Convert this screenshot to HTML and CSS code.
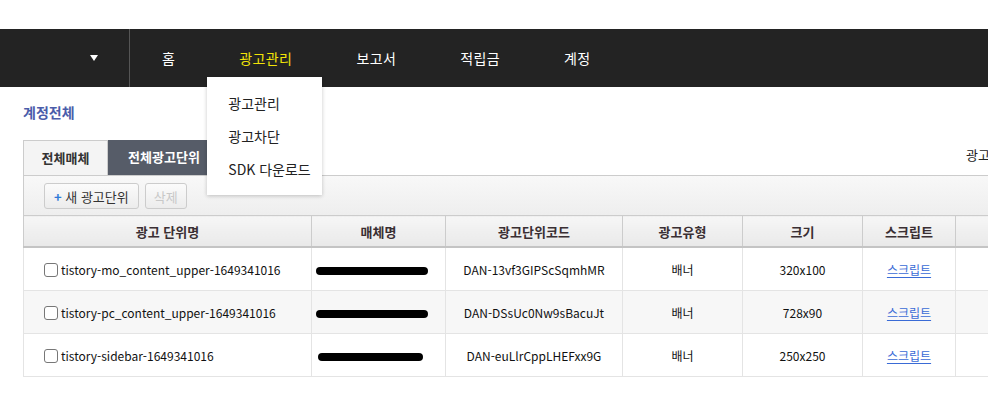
FILE: index.html
```html
<!DOCTYPE html>
<html lang="ko">
<head>
    <meta charset="UTF-8">
    <title>광고관리 - 전체광고단위</title>
    <link rel="stylesheet" href="styles.css">
</head>
<body>
    <div class="topspace"></div>
    <div class="gnb">
        <div class="gnb-side">
            <span class="arrow"></span>
        </div>
        <ul class="gnb-menu">
            <li>홈</li>
            <li class="on">광고관리
                <ul class="submenu">
                    <li>광고관리</li>
                    <li>광고차단</li>
                    <li>SDK 다운로드</li>
                </ul>
            </li>
            <li>보고서</li>
            <li>적립금</li>
            <li>계정</li>
        </ul>
    </div>

    <div class="content">
        <h2 class="page-title">계정전체</h2>

        <div class="tab-row">
            <a class="tab">전체매체</a>
            <a class="tab active">전체광고단위</a>
            <span class="tab-info">광고단위 총 3개</span>
        </div>

        <div class="toolbar">
            <button class="btn"><span class="plus">+</span> 새 광고단위</button>
            <button class="btn disabled">삭제</button>
        </div>

        <table class="unit-table">
            <colgroup>
                <col style="width: 288px">
                <col style="width: 134px">
                <col style="width: 177px">
                <col style="width: 120px">
                <col style="width: 120px">
                <col style="width: 93px">
                <col style="width: 150px">
            </colgroup>
            <thead>
                <tr>
                    <th>광고 단위명</th>
                    <th>매체명</th>
                    <th>광고단위코드</th>
                    <th>광고유형</th>
                    <th>크기</th>
                    <th>스크립트</th>
                    <th>상태</th>
                </tr>
            </thead>
            <tbody>
                <tr>
                    <td class="name"><span class="check"></span>tistory-mo_content_upper-1649341016</td>
                    <td class="media"><span class="redact"></span></td>
                    <td>DAN-13vf3GIPScSqmhMR</td>
                    <td>배너</td>
                    <td>320x100</td>
                    <td><a class="link">스크립트</a></td>
                    <td></td>
                </tr>
                <tr class="alt">
                    <td class="name"><span class="check"></span>tistory-pc_content_upper-1649341016</td>
                    <td class="media"><span class="redact"></span></td>
                    <td>DAN-DSsUc0Nw9sBacuJt</td>
                    <td>배너</td>
                    <td>728x90</td>
                    <td><a class="link">스크립트</a></td>
                    <td></td>
                </tr>
                <tr>
                    <td class="name"><span class="check"></span>tistory-sidebar-1649341016</td>
                    <td class="media"><span class="redact short"></span></td>
                    <td>DAN-euLlrCppLHEFxx9G</td>
                    <td>배너</td>
                    <td>250x250</td>
                    <td><a class="link">스크립트</a></td>
                    <td></td>
                </tr>
            </tbody>
        </table>
    </div>
</body>
</html>
```

FILE: styles.css
```css
html, body {
    margin: 0;
    padding: 0;
    overflow: hidden;
}
body {
    font-family: "Noto Sans CJK KR", "Liberation Sans", sans-serif;
    color: #222;
    background-color: #fff;
}
ul {
    list-style: none;
    margin: 0;
    padding: 0;
}
.topspace {
    height: 29px;
}
.gnb {
    display: flex;
    height: 58px;
    background-color: #232323;
}
.gnb-side {
    width: 130px;
    border-right: 1px solid #555;
    display: flex;
    align-items: center;
    justify-content: flex-end;
    padding-right: 31px;
    box-sizing: border-box;
}
.arrow {
    width: 0;
    height: 0;
    border-left: 4px solid transparent;
    border-right: 4px solid transparent;
    border-top: 6px solid #fff;
}
.gnb-menu {
    display: flex;
    align-items: center;
}
.gnb-menu > li {
    position: relative;
    padding: 0 32px;
    color: #fff;
    font-size: 14px;
    line-height: 58px;
    letter-spacing: 0.4px;
}
.gnb-menu > li.on {
    color: #f2e307;
}
.submenu {
    position: absolute;
    left: 0;
    top: 48px;
    width: 115px;
    padding: 10px 0 9px;
    background-color: #fff;
    box-shadow: 0 1px 4px rgba(0, 0, 0, 0.22);
    z-index: 10;
    letter-spacing: 0;
}
.submenu li {
    padding-left: 21px;
    font-size: 14px;
    line-height: 33px;
    color: #222;
    white-space: nowrap;
}
.content {
    width: 1100px;
    padding-left: 23px;
}
.page-title {
    margin: 0;
    padding-top: 15px;
    height: 38px;
    font-size: 14px;
    line-height: 20px;
    font-weight: bold;
    color: #4a5caa;
}
.tab-row {
    display: flex;
    align-items: flex-start;
    height: 35px;
}
.tab {
    height: 35px;
    box-sizing: border-box;
    line-height: 34px;
    font-size: 13px;
    font-weight: bold;
    text-align: center;
    color: #333;
}
.tab:first-child {
    width: 85px;
    border: 1px solid #ccc;
    border-bottom: none;
    background-color: #f4f4f4;
}
.tab.active {
    width: 112px;
    background-color: #565c68;
    color: #fff;
}
.tab-info {
    margin-left: 746px;
    font-size: 13px;
    line-height: 30px;
    color: #222;
    white-space: nowrap;
}
.toolbar {
    display: flex;
    gap: 6px;
    height: 40px;
    box-sizing: border-box;
    padding: 7px 0 0 20px;
    border: 1px solid #ccc;
    border-bottom: none;
    background: linear-gradient(#f8f8f8, #eeeeee);
}
.btn {
    height: 26px;
    padding: 0 9px;
    border: 1px solid #ccc;
    border-radius: 3px;
    background: linear-gradient(#fbfbfb, #ececec);
    font-family: inherit;
    font-size: 13px;
    color: #333;
}
.btn .plus {
    color: #2f7ad8;
    font-weight: bold;
}
.btn.disabled {
    color: #c8c8c8;
    padding: 0 8px;
}
.unit-table {
    table-layout: fixed;
    border-collapse: collapse;
    width: 1082px;
    font-size: 12px;
}
.unit-table th {
    height: 30px;
    padding: 0;
    border: 1px solid #ccc;
    border-bottom: 2px solid #c4c4c4;
    background: linear-gradient(#f6f6f6, #e9e9e9);
    color: #3a2f33;
    font-size: 13px;
    font-weight: bold;
}
.unit-table td {
    height: 42px;
    padding: 0;
    border: 1px solid #e4e4e4;
    text-align: center;
    color: #111;
}
.unit-table tr.alt td {
    background-color: #f7f7f7;
}
.unit-table td.name {
    text-align: left;
    padding-left: 20px;
}
.check {
    display: inline-block;
    width: 12px;
    height: 12px;
    margin-right: 3px;
    vertical-align: -2px;
    border: 1px solid #777;
    border-radius: 3px;
    background-color: #fff;
}
.unit-table td.media {
    text-align: left;
    padding-left: 4px;
}
.redact {
    display: inline-block;
    width: 112px;
    height: 8px;
    border-radius: 4px;
    background-color: #000;
    vertical-align: middle;
}
.redact.short {
    width: 105px;
    margin-left: 2px;
}
.link {
    color: #3a6bd6;
    text-decoration: underline;
    text-underline-offset: 2px;
}
```
